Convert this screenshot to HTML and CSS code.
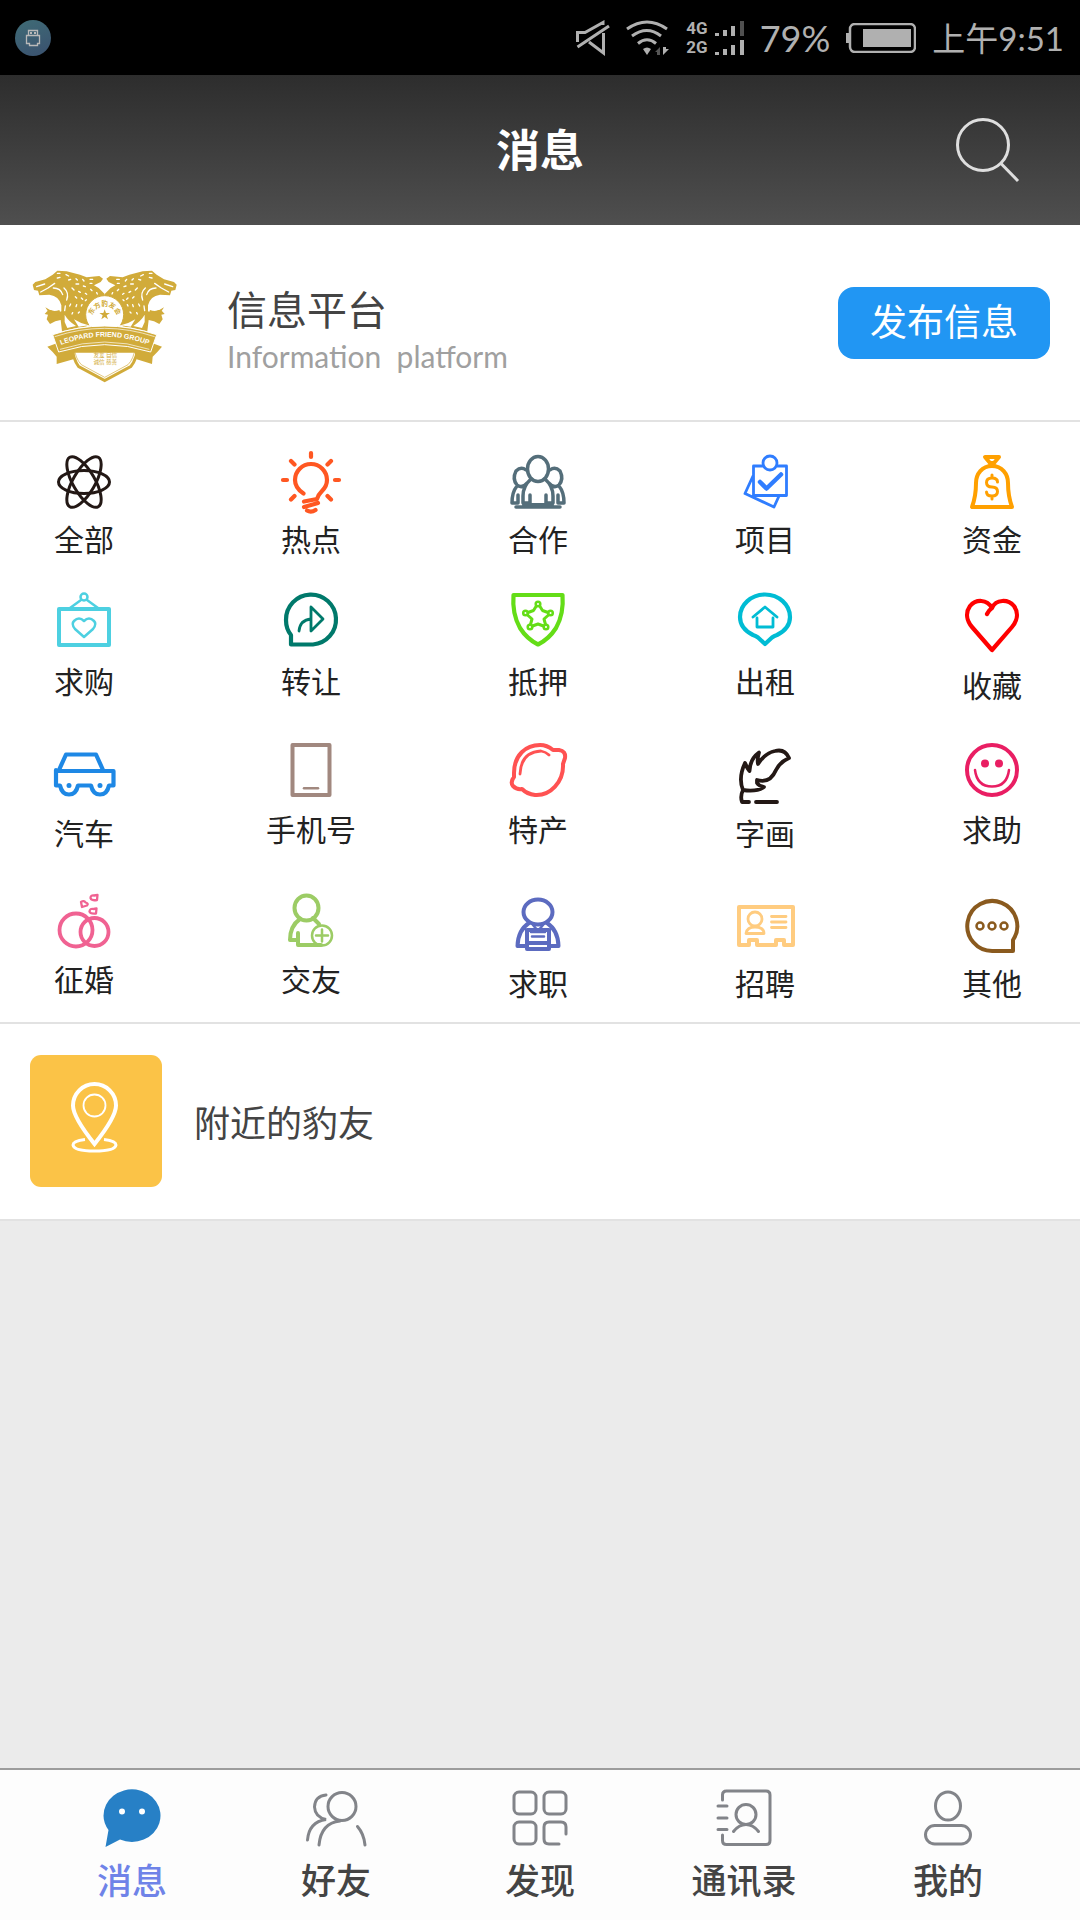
FILE: index.html
```html
<!DOCTYPE html>
<html lang="zh-CN">
<head>
<meta charset="utf-8">
<meta name="viewport" content="width=device-width, initial-scale=1">
<title>消息</title>
<link rel="stylesheet" href="styles.css">
</head>
<body>
<div class="status">
  <svg class="usb" viewBox="0 0 36 36" aria-hidden="true">
    <defs><linearGradient id="usb" x1="0" y1="0" x2="0.4" y2="1"><stop offset="0" stop-color="#3f6c76"/><stop offset="1" stop-color="#3b5570"/></linearGradient></defs>
    <circle cx="18" cy="18" r="18" fill="url(#usb)"/>
    <path d="M13.500 15.500V10.500H22.500V15.500M11.500 15.500H24.500V23.500H22.500V25.500H14.500V23.500H11.500Z" fill="none" stroke="#b9b9b9" stroke-width="1.300"/>
    <path d="M15 12h2v2h-2zM19 12h2v2h-2z" fill="#b9b9b9"/>
  </svg>
  <svg class="mute" viewBox="0 0 34 36" fill="none" stroke="#b0b0b0" stroke-width="3" aria-hidden="true">
    <path d="M1.500 22V12.500H9L27 2.500V5M27.500 13V33L13 22M1.500 27L33 6"/>
  </svg>
  <svg class="wifi" viewBox="0 0 44 36" fill="none" stroke="#b0b0b0" stroke-width="3" aria-hidden="true">
    <path d="M1 9Q21 -5 41 9M6 16Q21 5 35 16M12 23.500Q21 16 30 23.500"/>
    <path d="M17 29q4-3 8 0l-4 6z" fill="#b0b0b0" stroke="none"/>
    <path d="M34 27v8h-3v-3h-2z" fill="#555" stroke="none"/><path d="M37 27v8l6-6h-3v-2z" fill="#b0b0b0" stroke="none"/>
  </svg>
  <div class="signal">
    <span>4G</span>
    <svg viewBox="0 0 29 15" fill="#b0b0b0" aria-hidden="true"><path d="M0 12h4v3h-4zM8 9h4v6h-4zM16 5h4v10h-4z"/><path d="M25 0h4v15h-4z" fill="#505050"/></svg>
    <span>2G</span>
    <svg viewBox="0 0 29 15" fill="#b0b0b0" aria-hidden="true"><path d="M0 12h4v3h-4zM8 9h4v6h-4zM16 5h4v10h-4zM25 0h4v15h-4z"/></svg>
  </div>
  <span class="percent">79%</span>
  <svg class="battery" viewBox="0 0 70 30" aria-hidden="true">
    <rect x="4" y="1" width="65" height="28" rx="5" fill="none" stroke="#b0b0b0" stroke-width="2.500"/>
    <path d="M0 10h4v10h-4zM17 6h48v18h-48z" fill="#b0b0b0"/>
  </svg>
  <time>上午9:51</time>
</div>

<header class="topbar">
  <h1>消息</h1>
  <button class="search" type="button" aria-label="搜索">
    <svg viewBox="0 0 64 66" fill="none" stroke="#dedede" stroke-width="3"><circle cx="27" cy="28" r="25.500"/><path d="M44.500 46L62 64"/></svg>
  </button>
</header>

<main>
  <section class="platform">
    <svg class="logo" viewBox="36 30 435 339" aria-label="Leopard Friend Group">
      <defs>
        <path id="ribbon" d="M120 256Q254 204 388 256"/>
        <path id="ring" d="M216 176A38 38 0 0 1 292 176"/>
        <g id="cat">
          <path fill="#d1ab3a" d="M254 102L236 84L222 76L242 66L249 56L238 48L200 52L180 44L140 34L112 32L98 44L76 58L46 66L38 74L42 90L54 92L58 106L88 104Q118 108 124 136L124 154L110 160L92 150Q80 152 74 162L84 164L80 178L90 192L106 184L122 180L126 214L160 206Q190 198 254 195Z"/>
          <path fill="#fff" d="M64 110Q104 100 122 136Q108 150 94 148L84 136L80 150Q72 132 64 110ZM134 186L134 164Q144 182 168 198L142 204ZM162 178Q184 192 206 196L176 200Z"/>
          <path fill="#d1ab3a" d="M76 142Q96 158 118 150L124 166L90 164Z"/>
          <g fill="none" stroke="#fff" stroke-width="4" stroke-linecap="round">
            <path d="M50 80L74 72M62 96L84 84L104 70M112 40h8M138 44l8 4M112 54l8-2M146 60l6-2M168 56l4 4M168 72h8M188 58l4 5M210 58h8M210 70h6M190 78l6 2M212 88l4 4M230 98l2 4M100 84Q122 84 128 104M132 84Q148 98 140 120M156 84l6 6M176 94l5 3M196 100l4 3M166 110l4 4M184 114l4 4M152 132l-3 6M170 134l-2 6M186 134l-2 4M136 138l-2 14M158 158l-2 4M178 156l-3 3M196 122l3-3"/>
          </g>
        </g>
      </defs>
      <use href="#cat"/>
      <use href="#cat" transform="matrix(-1 0 0 1 508 0)"/>
      <path d="M152 246Q160 300 176 320L254 362L332 320Q350 300 358 246Z" fill="#fff" stroke="#d1ab3a" stroke-width="9"/>
      <path d="M162 260Q166 296 184 314L254 352L324 314Q342 296 346 260" fill="none" stroke="#d1ab3a" stroke-width="2"/>
      <circle cx="254" cy="164" r="57" fill="#fff" stroke="#d1ab3a" stroke-width="3"/>
      <path d="M200 196H308V215H200Z" fill="#fff"/>
      <path d="M254 148l4 11h12l-10 7l4 12l-10-7l-10 7l4-12l-10-7h12z" fill="#d1ab3a"/>
      <path d="M110 250L82 260L98 276L110 290L110 312L160 298L164 278L344 278L350 298L396 312L398 290L412 276L426 260L398 250Z" fill="#d1ab3a"/>
      <path d="M98 224Q254 172 410 224L392 276Q254 232 116 276Z" fill="#d1ab3a" stroke="#fff" stroke-width="3"/>
      <path d="M104 230Q254 180 404 230M120 268Q254 224 388 268" fill="none" stroke="#fff" stroke-width="2"/>
      <text class="logo-band"><textPath href="#ribbon" startOffset="50%">LEOPARD FRIEND GROUP</textPath></text>
      <text class="logo-ring"><textPath href="#ring" startOffset="50%">东方豹友会</textPath></text>
      <text class="logo-motto" x="256" y="290">友爱 自信</text>
      <text class="logo-motto" x="256" y="312">诚信 慈善</text>
    </svg>
    <div class="platform-text">
      <h2>信息平台</h2>
      <p>Information&nbsp; platform</p>
    </div>
    <button class="publish" type="button">发布信息</button>
  </section>

  <nav class="categories" aria-label="信息分类">
    <a href="#all"><svg viewBox="-36 0 72 64" stroke="#231815" stroke-width="3"><ellipse cy="32" rx="25.500" ry="11.500"/><ellipse cy="32" rx="28.500" ry="11" transform="rotate(60 0 32)"/><ellipse cy="32" rx="28.500" ry="11" transform="rotate(-60 0 32)"/></svg><span>全部</span></a>
    <a href="#hot"><svg viewBox="-36 0 72 64" stroke="#ff5722" stroke-width="4.200"><path d="M0 3V7M-28 30h4M24 30h4M-20 11l3.500 3.500M20 11l-3.500 3.500M-20 49.500l3.500-3.500M20 49.500l-3.500-3.500M-7.500 43.500Q-16 38 -16 30A16 16 0 0 1 16 30Q16 36 11 41Q7 45 6 49L-7 51.500M7 53L-7 57M-4 60.500Q0 63 4.500 60"/></svg><span>热点</span></a>
    <a href="#cooperate"><svg viewBox="-36 0 72 64" stroke="#546e7a" stroke-width="3.500"><ellipse cy="19" rx="10.500" ry="12.500"/><path d="M-12 20Q-17 16 -22 21Q-26 29 -21 35Q-16 39 -11 33M12 20Q17 16 22 21Q26 29 21 35Q16 39 11 33M-7 29Q-15 36 -15 46V53H-8V45M7 29Q15 36 15 46V53H8V45M-21 36Q-26 42 -26 53H-20V45M21 36Q26 42 26 53H20V45M-22 57H22"/><path d="M-14 55H14" stroke-width="4"/></svg><span>合作</span></a>
    <a href="#project"><svg viewBox="-36 0 72 64" stroke="#2f7dff" stroke-width="2.800" stroke-linejoin="miter"><path d="M-2 16H-11.500V45.500H21.500V16H12M-12 26L-20 43.500L9 57L14 46"/><circle cx="5" cy="13" r="7"/><path d="M-5 32L1.500 38.500L16 24.500" stroke-width="4.500"/></svg><span>项目</span></a>
    <a href="#fund"><svg viewBox="-36 0 72 64" stroke="#ffa000" stroke-width="4"><path d="M-7 7H7L2 13H-2ZM0 16C-10 16 -16 24 -16 33Q-16 46 -20 57H20Q16 46 16 33C16 24 10 16 0 16Z"/><path d="M5.500 32Q5.500 28 0 28Q-5.500 28 -5.500 32.500Q-5.500 37 0 37Q5.500 37 5.500 41.500Q5.500 46 0 46Q-5.500 46 -5.500 42M0 25V28M0 46V49" stroke-width="3"/></svg><span>资金</span></a>

    <a href="#buy"><svg viewBox="-36 0 72 64" stroke="#4dd0e1" stroke-width="4" stroke-linejoin="miter"><rect x="-25" y="17" width="50" height="36"/><path d="M-14 16L-3 8M14 16L3 8M0 45L-9 37Q-13 32 -10 29Q-5 24 0 29Q5 24 10 29Q13 32 9 37Z" stroke-width="2.500"/><circle cy="5" r="3.500" stroke-width="2.500"/></svg><span>求购</span></a>
    <a href="#transfer"><svg viewBox="-36 0 72 64" stroke="#00796b" stroke-width="4.200" stroke-linejoin="miter"><path d="M-20 52.500V43Q-25 37 -25 28A25 25 0 1 1 2 52.500Z"/><path d="M0 15L12 27L0 39ZM-12 39Q-11 28 0 27" stroke-width="2.800" stroke-linejoin="round"/></svg><span>转让</span></a>
    <a href="#mortgage"><svg viewBox="-36 0 72 64" stroke="#64dd17" stroke-width="4.200" stroke-linejoin="miter"><path d="M-24.500 3H24.500Q26 22 18 36Q11 47 0 52.500Q-11 47 -18 36Q-26 22 -24.500 3Z"/><path d="M-2 14.500L-4.500 18.500L-10 20.500M2 14.500L4.500 18.500L10 20.500M-10.500 23L-6 27L-7.500 32.500M10.500 23L6 27L7.500 32.500M-5.500 34L0 32L5.500 34" stroke-width="3"/><g stroke-width="2.500"><circle cy="12" r="2.300"/><circle cx="-12.500" cy="21" r="2.300"/><circle cx="12.500" cy="21" r="2.300"/><circle cx="-8" cy="35" r="2.300"/><circle cx="8" cy="35" r="2.300"/></g></svg><span>抵押</span></a>
    <a href="#rent"><svg viewBox="-36 0 72 64" stroke="#00bcd4" stroke-width="4.200" stroke-linejoin="miter"><path d="M0 52L-7 45.500Q-9 44 -12 43C-20 39 -25 33 -25 25A25 22.500 0 0 1 25 25C25 33 20 39 12 43Q9 44 7 45.500Z"/><path d="M-12 25L0 15L12 25M-8 26V35H8V26" stroke-width="2.800"/></svg><span>出租</span></a>
    <a class="low" href="#favorite"><svg viewBox="-36 0 72 64" stroke="#f00" stroke-width="4.200" stroke-linejoin="miter"><path d="M-5 18Q-3 14 0 12C4 3 16 3 22 10C27 17 25 25 20 31L0 54L-20 31C-25 25 -27 17 -22 10C-16 3 -5 3 0 12"/></svg><span>收藏</span></a>

    <a class="low" href="#car"><svg viewBox="-36 0 72 64" stroke="#1e88e5" stroke-width="4.200" stroke-linejoin="miter"><path d="M-25 26L-18 10.500H12L19 26"/><path d="M-25 27H29.500V41.500H25Q23 50.500 16 50.500Q9 50.500 7 41.500H-6Q-8 50.500 -15 50.500Q-22 50.500 -24 41.500H-28V26"/><path d="M-15 41.500h0M16 41.500h0" stroke-width="5"/></svg><span>汽车</span></a>
    <a href="#phone"><svg viewBox="-36 0 72 64" stroke="#a1887f" stroke-width="4" stroke-linejoin="miter"><rect x="-18.500" y="5" width="37" height="50"/><path d="M-7 48.300H7" stroke-width="2.500"/></svg><span>手机号</span></a>
    <a href="#specialty"><svg viewBox="-36 0 72 64" stroke="#ff5252" stroke-width="4"><path d="M-24 33C-24 15 -12 5 2 5Q9 5 15 10L21 10Q28 11 27 18L25 24C26 42 12 56 -3 55Q-11 54 -16 49Q-21 50 -25 46Q-28 42 -24 37Z"/><path d="M-18 34Q-17 12 3 11Q8 12 11 15" stroke-width="2.800"/></svg><span>特产</span></a>
    <a class="low" href="#art"><svg viewBox="-36 0 72 64" stroke="#231815" stroke-width="3.800"><path d="M-22 46Q-27 34 -20 19Q-18 24 -15.500 27Q-15 15 -6 8.500Q-8 15 -7 20Q0 9 10 7Q20 4.500 24 14Q15 18 11 26Q5 40 -8 36L-8 39Q-6 42 -1 43Q-8 48 -22 46Q-25 52 -23 58H-16M-9 58H12"/></svg><span>字画</span></a>
    <a href="#help"><svg viewBox="-36 0 72 64" stroke="#e91e63" stroke-width="4"><circle cy="30" r="25"/><path d="M-17 30Q-15 46.500 0 46.500Q15 46.500 17 30" stroke-width="2.500"/><path d="M-7 23.500h0M7 23.500h0" stroke-width="8"/></svg><span>求助</span></a>

    <a href="#marriage"><svg viewBox="-36 0 72 64" stroke="#f06292" stroke-width="3.800"><circle cx="-8" cy="40" r="16.500"/><circle cx="10.500" cy="42" r="14"/><path d="M6.500 8Q6.500 5 10 5.500L13.500 5L13 10Q7 11 6.500 8ZM-3 12Q0 10 1.500 12.500Q5 13.500 3 15.500L-2 17ZM5.500 21.500Q6 18 9.500 19L12.500 18.500L12 23.500Q6 24 5.500 21.500Z" stroke-width="2.300"/></svg><span>征婚</span></a>
    <a href="#friend"><svg viewBox="-36 0 72 64" stroke="#9ccc65" stroke-width="4"><ellipse cx="-4.500" cy="18" rx="12" ry="12.500"/><path d="M-11 29Q-21 36 -21 50H-13V43M-13 50V55H10M2 28L8 34"/><g stroke-width="2.500"><circle cx="11" cy="45.500" r="10"/><path d="M5 45.500H17M11 39.500V51.500"/></g></svg><span>交友</span></a>
    <a class="low" href="#job"><svg viewBox="-36 0 72 64" stroke="#5c6bc0" stroke-width="4"><ellipse cy="18" rx="14.500" ry="12.500"/><path d="M-9 29Q-20 36 -20.500 52H-12M9 29Q20 36 20.500 52H12M-11 49V55H11V49M-11 36V49H11V36Z"/><path d="M-7 38H7M-6 42.500H6M-5 31L0 37L5 31" stroke-width="2.500"/></svg><span>求职</span></a>
    <a class="low" href="#recruit"><svg viewBox="-36 0 72 64" stroke="#ffcc80" stroke-width="4" stroke-linejoin="miter"><path d="M-26 13H28V51H19V46H11V51H-8V46H-16V51H-26Z"/><g stroke-width="2.800"><circle cx="-10" cy="25" r="7"/><path d="M-19 39.500Q-18 33 -10 33Q-1 33 -1 39.500ZM6.500 22.500H21M6.500 28H21M6.500 33.500H21"/></g></svg><span>招聘</span></a>
    <a class="low" href="#other"><svg viewBox="-36 0 72 64" stroke="#8a5a1e" stroke-width="4" stroke-linejoin="miter"><path d="M21 57V46A25 25 0 1 0 1 57Z"/><g stroke-width="2.500"><circle cx="-12" cy="32" r="3.500"/><circle cy="32" r="3.500"/><circle cx="12" cy="32" r="3.500"/></g></svg><span>其他</span></a>
  </nav>

  <a class="nearby" href="#nearby">
    <svg viewBox="0 0 132 132" fill="none" stroke="#fff" aria-hidden="true">
      <rect width="132" height="132" rx="11" fill="#fbc347" stroke="none"/>
      <path d="M64.500 89Q43 62 43 50.500A21.500 21.500 0 0 1 86 50.500Q86 62 64.500 89Z" stroke-width="4"/>
      <circle cx="64.500" cy="50.500" r="11" stroke-width="1.800"/>
      <path d="M55 84.500Q43 86 43 90Q44 96 64.500 96Q85 96 86 90Q86 86 74 84.500" stroke-width="3"/>
    </svg>
    <span>附近的豹友</span>
  </a>
</main>

<nav class="tabs" aria-label="主导航">
  <a class="active" href="#messages" aria-current="page"><svg viewBox="-32 0 64 64"><path d="M-23.500 44Q-28.500 37 -28.500 29.700A28.500 26.300 0 1 1 -12 53.500L-26.500 61Z" fill="#2780c6" stroke="none"/><path d="M-10 25.500h0M10 25.500h0" stroke="#fff" stroke-width="6"/></svg><span>消息</span></a>
  <a href="#friends"><svg viewBox="-32 0 64 64"><circle cx="6" cy="20.500" r="14"/><path d="M-17 59Q-15 37 4 35M21.500 40.500Q28 48 29 59M-10 9Q-21 10 -21.500 21Q-21 31 -10 33.500Q-27 36 -28.500 54"/></svg><span>好友</span></a>
  <a href="#discover"><svg viewBox="-32 0 64 64"><rect x="-26" y="6" width="22" height="22" rx="5"/><rect x="4" y="6" width="22" height="22" rx="5"/><rect x="-26" y="36" width="22" height="22" rx="5"/><path d="M26 48V41Q26 36 21 36H9Q4 36 4 41V53Q4 58 9 58H19"/></svg><span>发现</span></a>
  <a href="#contacts"><svg viewBox="-32 0 64 64"><path d="M-21.500 14V9Q-21.500 5 -17.500 5H22Q26 5 26 9V54.500Q26 58.500 22 58.500H-17.500Q-21.500 58.500 -21.500 54.500V49M-26 20H-17M-26 32H-17M-26 43.500H-17"/><circle cx="2" cy="28.500" r="10"/><path d="M-10.500 45.500Q-5 38.500 2 38.500Q9 38.500 14.500 45.500"/></svg><span>通讯录</span></a>
  <a href="#me"><svg viewBox="-32 0 64 64"><ellipse cy="20" rx="12.500" ry="14"/><rect x="-22.500" y="39.500" width="45" height="18.500" rx="9.250"/></svg><span>我的</span></a>
</nav>
</body>
</html>
```

FILE: styles.css
```css
* {
  box-sizing: border-box;
}

body {
  margin: 0;
  min-height: 100vh;
  display: flex;
  flex-direction: column;
  background: #ebebeb;
  color: #444;
  font-family: Lato, "Noto Sans CJK SC", sans-serif;
}

h1, h2, p {
  margin: 0;
  font-weight: 400;
}

a {
  color: inherit;
  text-decoration: none;
}

button {
  border: 0;
  padding: 0;
  font: inherit;
  cursor: pointer;
}

svg {
  display: block;
  flex: none;
}

/* Phone status bar */
.status {
  height: 75px;
  padding: 0 16px 0 15px;
  display: flex;
  align-items: center;
  gap: 16px;
  background: #000;
  color: #b0b0b0;
  font-size: 33px;
  line-height: 40px;
}

.usb {
  width: 36px;
  height: 36px;
  margin-right: auto;
}

.mute {
  width: 34px;
  height: 36px;
}

.wifi {
  width: 44px;
  height: 36px;
}

.signal {
  display: grid;
  grid-template-columns: auto 29px;
  column-gap: 7px;
  row-gap: 4px;
  align-items: end;
  font: 700 17px/15px Roboto, sans-serif;
}

.signal svg {
  width: 29px;
  height: 15px;
}

.percent {
  font-size: 36px;
}

.battery {
  width: 70px;
  height: 30px;
}

/* Title bar */
.topbar {
  height: 150px;
  padding: 0 60px;
  display: grid;
  grid-template-columns: 1fr auto 1fr;
  align-items: center;
  background: linear-gradient(#2d2d2d, #4f4f4f);
}

.topbar h1 {
  grid-column: 2;
  color: #fff;
  font-size: 44px;
  line-height: 60px;
  font-weight: 700;
}

.search {
  justify-self: end;
  background: none;
}

.search svg {
  width: 64px;
  height: 66px;
}

/* Platform banner */
main {
  flex: 1;
}

.platform {
  height: 197px;
  padding: 0 30px 0 32px;
  display: flex;
  align-items: center;
  background: #fff;
  border-bottom: 2px solid #e2e2e2;
}

.logo {
  width: 145px;
  height: 113px;
  margin-top: 8px;
}

.logo text {
  text-anchor: middle;
  fill: #d1ab3a;
}

.logo .logo-band {
  fill: #fff;
  font: 700 21px "Liberation Sans", sans-serif;
}

.logo-ring {
  font: 700 20px "Noto Sans CJK SC", sans-serif;
}

.logo-motto {
  font: 400 17px "Noto Sans CJK SC", sans-serif;
}

.platform-text {
  flex: 1;
  padding: 18px 0 0 50px;
}

.platform-text h2 {
  font-size: 40px;
  line-height: 48px;
}

.platform-text p {
  color: #a0a0a0;
  font-size: 30px;
  line-height: 44px;
}

.publish {
  width: 212px;
  height: 72px;
  border-radius: 16px;
  background: #2196f3;
  color: #fff;
  font-size: 37px;
  line-height: 68px;
  padding-bottom: 2px;
}

/* Category icons */
.categories {
  padding: 28px 28px 19px 24px;
  display: grid;
  grid-template-columns: repeat(5, 120px);
  grid-template-rows: 142px 148px 150px 113px;
  justify-content: space-between;
  background: #fff;
  border-bottom: 2px solid #e2e2e2;
  color: #222;
}

.categories a {
  display: flex;
  flex-direction: column;
  align-items: center;
  gap: 8px;
  font-size: 30px;
  line-height: 34px;
}

.categories .low {
  padding-top: 4px;
}

.categories svg {
  width: 72px;
  height: 64px;
  fill: none;
  stroke-linecap: round;
  stroke-linejoin: round;
}

/* Nearby entry */
.nearby {
  height: 197px;
  padding: 0 30px 2px;
  display: flex;
  align-items: center;
  gap: 32px;
  background: #fff;
  border-bottom: 2px solid #e2e2e2;
  font-size: 36px;
}

.nearby svg {
  width: 132px;
  height: 132px;
}

/* Bottom tabs */
.tabs {
  padding: 16px 30px 20px;
  display: grid;
  grid-template-columns: repeat(5, 1fr);
  background: #fdfdfd;
  border-top: 2px solid #9c9c9c;
}

.tabs a {
  display: flex;
  flex-direction: column;
  align-items: center;
  gap: 10px;
  font-size: 35px;
  line-height: 40px;
  font-weight: 500;
}

.tabs svg {
  width: 64px;
  height: 64px;
  fill: none;
  stroke: #828489;
  stroke-width: 3;
  stroke-linecap: round;
}

.tabs .active {
  color: #6f83e8;
}
```
